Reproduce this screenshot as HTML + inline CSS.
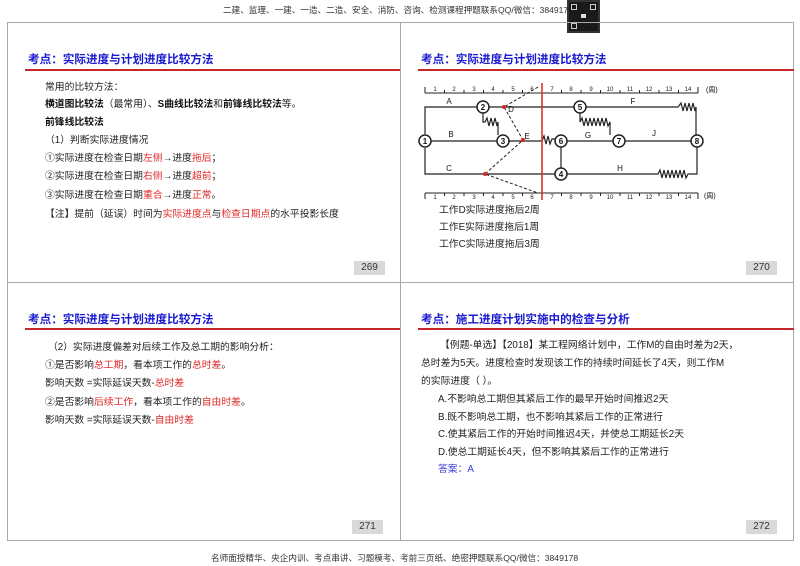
<!DOCTYPE html>
<html><head><meta charset="utf-8"><style>
*{margin:0;padding:0;box-sizing:border-box}
body{width:800px;height:566px;background:#fff;position:relative;overflow:hidden;font-family:"Liberation Sans","Noto Sans CJK SC",sans-serif;color:#222}
.a{position:absolute;white-space:nowrap;font-size:9.8px;line-height:14px}
.t{position:absolute;font-size:11.6px;font-weight:bold;color:#1a1ad0;line-height:16px;white-space:nowrap}
.rl{position:absolute;height:1.5px;background:#c8282a}
.r{color:#e02a2a}
b{font-weight:bold;color:#111}
.pn{position:absolute;width:31px;height:14px;background:#d9d9d9;font-size:10px;line-height:14px;text-align:center;color:#333}
.box{position:absolute;border:1px solid #a8a8a8}
.hd{position:absolute;font-size:8.6px;color:#333;white-space:nowrap}
</style></head><body>
<div class="hd" style="left:223px;top:4px">二建、监理、一建、一造、二造、安全、消防、咨询、检测课程押题联系QQ/微信：3849178</div>
<div style="position:absolute;left:567px;top:0;width:33px;height:33px;background:#1a1a1a;border:2px solid #333">
<div style="position:absolute;left:2px;top:2px;width:6px;height:6px;border:1px solid #ccc"></div>
<div style="position:absolute;right:2px;top:2px;width:6px;height:6px;border:1px solid #ccc"></div>
<div style="position:absolute;left:2px;bottom:2px;width:6px;height:6px;border:1px solid #ccc"></div>
<div style="position:absolute;left:12px;top:12px;width:5px;height:4px;background:#ddd"></div>
</div>
<div class="box" style="left:7px;top:22px;width:787px;height:519px"></div>
<div style="position:absolute;left:400px;top:22px;width:1px;height:519px;background:#a8a8a8"></div>
<div style="position:absolute;left:7px;top:282px;width:787px;height:1px;background:#a8a8a8"></div>

<!-- TL -->
<div class="t" style="left:28px;top:52px">考点：实际进度与计划进度比较方法</div>
<div class="rl" style="left:25px;top:69px;width:375px"></div>
<div class="a" style="left:45px;top:81px">常用的比较方法：</div>
<div class="a" style="left:45px;top:98px"><b>横道图比较法</b>（最常用）、<b>S曲线比较法</b>和<b>前锋线比较法</b>等。</div>
<div class="a" style="left:45px;top:116px"><b>前锋线比较法</b></div>
<div class="a" style="left:45px;top:134px">（1）判断实际进度情况</div>
<div class="a" style="left:45px;top:152px">①实际进度在检查日期<span class="r">左侧</span>→进度<span class="r">拖后</span>；</div>
<div class="a" style="left:45px;top:170px">②实际进度在检查日期<span class="r">右侧</span>→进度<span class="r">超前</span>；</div>
<div class="a" style="left:45px;top:189px">③实际进度在检查日期<span class="r">重合</span>→进度<span class="r">正常</span>。</div>
<div class="a" style="left:45px;top:208px">【注】提前（延误）时间为<span class="r">实际进度点</span>与<span class="r">检查日期点</span>的水平投影长度</div>
<div class="pn" style="left:354px;top:261px">269</div>

<!-- TR -->
<div class="t" style="left:421px;top:52px">考点：实际进度与计划进度比较方法</div>
<div class="rl" style="left:418px;top:69px;width:376px"></div>
<svg style="position:absolute;left:400px;top:80px" width="400" height="125" viewBox="400 80 400 125" font-family="Liberation Sans" font-size="8">
<g stroke="#222" stroke-width="1" fill="none">
<path d="M425 93H698M425 87V93M698 87V93"/>
<path d="M444.5 90V93M464 90V93M483.5 90V93M503 90V93M522.5 90V93M542 90V93M561.5 90V93M581 90V93M600.5 90V93M620 90V93M639.5 90V93M659 90V93M678.5 90V93"/>
<path d="M425 193H698M425 193V199M698 193V199"/>
<path d="M444.5 193V196M464 193V196M483.5 193V196M503 193V196M522.5 193V196M542 193V196M561.5 193V196M581 193V196M600.5 193V196M620 193V196M639.5 193V196M659 193V196M678.5 193V196"/>
</g>
<g font-size="6" text-anchor="middle" fill="#222">
<text x="435" y="91">1</text><text x="454" y="91">2</text><text x="474" y="91">3</text><text x="493" y="91">4</text><text x="513" y="91">5</text><text x="532" y="91">6</text><text x="552" y="91">7</text><text x="571" y="91">8</text><text x="591" y="91">9</text><text x="610" y="91">10</text><text x="630" y="91">11</text><text x="649" y="91">12</text><text x="669" y="91">13</text><text x="688" y="91">14</text>
<text x="435" y="199">1</text><text x="454" y="199">2</text><text x="474" y="199">3</text><text x="493" y="199">4</text><text x="513" y="199">5</text><text x="532" y="199">6</text><text x="552" y="199">7</text><text x="571" y="199">8</text><text x="591" y="199">9</text><text x="610" y="199">10</text><text x="630" y="199">11</text><text x="649" y="199">12</text><text x="669" y="199">13</text><text x="688" y="199">14</text>
</g>
<text x="706" y="92" font-size="7">(周)</text><text x="704" y="198" font-size="7">(周)</text>
<g stroke="#222" stroke-width="1.2" fill="none">
<path d="M425 134V107H477"/><path d="M431 141H497"/><path d="M425 148V174H555"/>
<path d="M489 107H574"/><path d="M586 107H678l3-4 2 8 2-8 2 8 2-8 2 8 2-8 2 8 1-4V135"/>
<path d="M483 113V122h2l2-4 2 8 2-8 2 8 2-8 2 8 1-4V135"/>
<path d="M509 141H542l2-5 2 8 2-8 2 8 2-5H555"/><path d="M567 141H613"/><path d="M625 141H691"/>
<path d="M580 113V122l2-4 2 8 2-8 2 8 2-8 2 8 2-8 2 8 2-8 2 8 2-8 2 8 2-8 2 8 2-4V135"/>
<path d="M561 168V147"/><path d="M567 174H658l2-4 2 8 2-8 2 8 2-8 2 8 2-8 2 8 2-8 2 8 2-8 2 8 2-8 2 8 2-4H697V147"/>
</g>
<g stroke="#222" stroke-width="1" fill="none" stroke-dasharray="3,2">
<path d="M538 87L504 107L523 140L485 174L538 193"/>
</g>
<g fill="#d22"><circle cx="504" cy="107" r="2"/><circle cx="523" cy="140" r="2"/><circle cx="485" cy="174" r="2"/></g>
<path d="M542 83V200" stroke="#e03030" stroke-width="1.6"/>
<g fill="#fff" stroke="#222" stroke-width="1.5">
<circle cx="425" cy="141" r="6"/><circle cx="483" cy="107" r="6"/><circle cx="503" cy="141" r="6"/><circle cx="580" cy="107" r="6"/><circle cx="561" cy="141" r="6"/><circle cx="619" cy="141" r="6"/><circle cx="697" cy="141" r="6"/><circle cx="561" cy="174" r="6"/>
</g>
<g font-size="8" font-weight="bold" text-anchor="middle" fill="#111">
<text x="425" y="144">1</text><text x="483" y="110">2</text><text x="503" y="144">3</text><text x="580" y="110">5</text><text x="561" y="144">6</text><text x="619" y="144">7</text><text x="697" y="144">8</text><text x="561" y="177">4</text>
<text x="449" y="104" font-weight="normal">A</text><text x="451" y="137" font-weight="normal">B</text><text x="449" y="171" font-weight="normal">C</text><text x="511" y="112" font-weight="normal">D</text><text x="527" y="139" font-weight="normal">E</text><text x="633" y="104" font-weight="normal">F</text><text x="588" y="138" font-weight="normal">G</text><text x="654" y="136" font-weight="normal">J</text><text x="620" y="171" font-weight="normal">H</text>
</g>
</svg>
<div class="a" style="left:439px;top:204px">工作D实际进度拖后2周</div>
<div class="a" style="left:439px;top:221px">工作E实际进度拖后1周</div>
<div class="a" style="left:439px;top:238px">工作C实际进度拖后3周</div>
<div class="pn" style="left:746px;top:261px">270</div>

<!-- BL -->
<div class="t" style="left:28px;top:312px">考点：实际进度与计划进度比较方法</div>
<div class="rl" style="left:25px;top:328px;width:375px"></div>
<div class="a" style="left:48px;top:341px">（2）实际进度偏差对后续工作及总工期的影响分析：</div>
<div class="a" style="left:45px;top:359px">①是否影响<span class="r">总工期</span>，看本项工作的<span class="r">总时差</span>。</div>
<div class="a" style="left:45px;top:377px">影响天数 =实际延误天数-<span class="r">总时差</span></div>
<div class="a" style="left:45px;top:396px">②是否影响<span class="r">后续工作</span>，看本项工作的<span class="r">自由时差</span>。</div>
<div class="a" style="left:45px;top:414px">影响天数 =实际延误天数-<span class="r">自由时差</span></div>
<div class="pn" style="left:352px;top:520px">271</div>

<!-- BR -->
<div class="t" style="left:421px;top:312px">考点：施工进度计划实施中的检查与分析</div>
<div class="rl" style="left:418px;top:328px;width:376px"></div>
<div class="a" style="left:440px;top:339px">【例题-单选】【2018】某工程网络计划中，工作M的自由时差为2天，</div>
<div class="a" style="left:421px;top:357px">总时差为5天。进度检查时发现该工作的持续时间延长了4天，则工作M</div>
<div class="a" style="left:421px;top:375px">的实际进度（ ）。</div>
<div class="a" style="left:438px;top:393px">A.不影响总工期但其紧后工作的最早开始时间推迟2天</div>
<div class="a" style="left:438px;top:411px">B.既不影响总工期，也不影响其紧后工作的正常进行</div>
<div class="a" style="left:438px;top:428px">C.使其紧后工作的开始时间推迟4天，并使总工期延长2天</div>
<div class="a" style="left:438px;top:446px">D.使总工期延长4天，但不影响其紧后工作的正常进行</div>
<div class="a" style="left:438px;top:463px;color:#3a3ad8">答案：A</div>
<div class="pn" style="left:746px;top:520px">272</div>

<div class="hd" style="left:211px;top:552px">名师面授精华、央企内训、考点串讲、习题模考、考前三页纸、绝密押题联系QQ/微信：3849178</div>
</body></html>
